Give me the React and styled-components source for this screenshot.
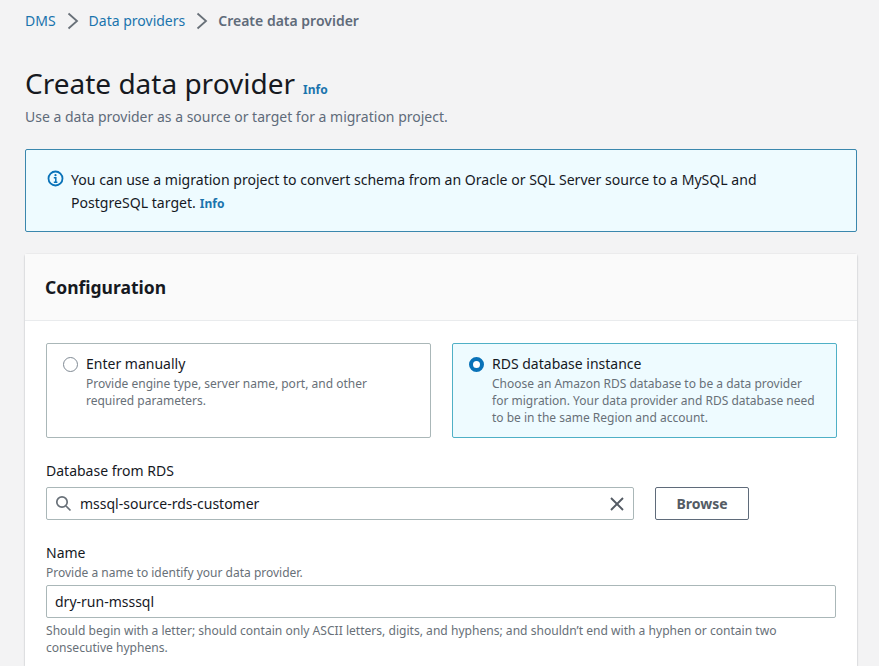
import React from "react";
import styled, { createGlobalStyle } from "styled-components";

const Global = createGlobalStyle`
  html, body { margin: 0; padding: 0; background: #f3f3f4; height: 666px; overflow: hidden; }
  body { font-family: "Noto Sans", "Open Sans", sans-serif; color: #16191f; }
  * { box-sizing: border-box; }
`;
const Page = styled.div`
  width: 879px; height: 666px; overflow: hidden; padding: 12px 22px 0 25px;
  display: flex; flex-direction: column;
`;
const Crumbs = styled.nav`
  display: flex; align-items: center; height: 18px; font-size: 14px; line-height: 18px;
`;
const CrumbLink = styled.span`color: #1a74ad;`;
const CrumbCurrent = styled.span`color: #5f6b7a; font-weight: 600;`;
const Chevron = styled.svg`width: 12px; height: 18px; margin: 0 10px 0 11px; flex: none;`;
const TitleRow = styled.div`
  display: flex; align-items: baseline; gap: 8px; margin-top: 32px; height: 42px;
`;
const Title = styled.h1`
  margin: 0; font-size: 28px; line-height: 42px; font-weight: 400; color: #16191f;
`;
const InfoLink = styled.span`
  color: #1a74ad; font-weight: 700; font-size: 12px;
`;
const Sub = styled.p`
  margin: 2px 0 0; font-size: 14px; line-height: 22px; color: #5f6b7a;
`;
const Alert = styled.div`
  margin-top: 21px; height: 83px; border: 1px solid #3a87ad; border-radius: 2px;
  background: #eefbff; padding: 18px 20px 0 21px; display: flex; gap: 7px;
`;
const AlertIcon = styled.svg`width: 17px; height: 17px; flex: none; margin-top: 2px;`;
const AlertText = styled.div`
  font-size: 14.08px; line-height: 23px; color: #16191f; width: 740px;
`;
const AlertLine = styled.div`
  display: flex; align-items: baseline; gap: 4px; white-space: nowrap;
`;
const Card = styled.section`
  margin-top: 22px; flex: 1; background: #fff; border-radius: 2px 2px 0 0;
  box-shadow: 0 1px 2px rgba(0,28,36,.25), 0 0 1px rgba(0,28,36,.2);
`;
const CardHeader = styled.header`
  height: 67px; background: #fafafa; border-bottom: 1px solid #e9ebed;
  padding: 20px 20px 0; font-size: 17.5px; line-height: 26px; font-weight: 700; color: #16191f;
`;
const CardBody = styled.div`padding: 22px 21px 0; display: flex; flex-direction: column;`;
const Tiles = styled.div`display: grid; grid-template-columns: 385px 385px; gap: 21px;`;
const Tile = styled.div`
  height: 95px; border: 1px solid ${p => p.$on ? "#4fb0c6" : "#aab7b8"}; border-radius: 2px;
  background: ${p => p.$on ? "#eefbff" : "#fff"}; padding: 10px 16px 0 16px; display: flex; gap: 8px;
`;
const Radio = styled.span`
  width: 15px; height: 15px; border-radius: 50%; flex: none; margin-top: 3px; background: #fff;
  border: ${p => p.$on ? "4.5px solid #0972b8" : "1px solid #808a94"};
`;
const TileText = styled.div`display: flex; flex-direction: column;`;
const TileTitle = styled.div`font-size: 14px; line-height: 20px; color: #16191f;`;
const TileDesc = styled.div`font-size: 12px; line-height: 17px; color: #687078; margin-top: 0.5px;`;
const FieldLabel = styled.div`
  font-size: 14px; line-height: 18px; color: #16191f; margin-top: ${p => p.$mt || 0}px;
`;
const FieldDesc = styled.div`font-size: 12px; line-height: 16px; color: #687078; margin-top: 3px;`;
const Row = styled.div`display: flex; gap: 21px; margin-top: 7px;`;
const InputBox = styled.div`
  height: 33px; width: ${p => p.$w}px; border: 1px solid #aab7b8; border-radius: 2px; background: #fff;
  display: flex; align-items: center; padding: 0 8px 0 8px; font-size: 14px; color: #16191f;
  margin-top: ${p => p.$mt || 0}px;
`;
const SearchIcon = styled.svg`width: 17px; height: 17px; flex: none; margin-right: 8px;`;
const ClearIcon = styled.svg`width: 16px; height: 16px; flex: none; margin-left: auto;`;
const Button = styled.div`
  width: 94px; height: 33px; border: 1px solid #5f6b7a; border-radius: 2px; background: #fff;
  display: flex; align-items: center; justify-content: center;
  font-size: 14px; font-weight: 700; color: #545b64;
`;
const Hint = styled.div`
  font-size: 12.08px; line-height: 17px; color: #687078; margin-top: 4px; width: 790px;
`;

export default function App() {
  const chev = (
    <Chevron viewBox="0 0 12 18" fill="none" stroke="#687078" strokeWidth="1.8">
      <path d="M1.5 1.5 L10 9 L1.5 16.5" />
    </Chevron>
  );
  return (
    <>
      <Global />
      <Page>
        <Crumbs>
          <CrumbLink>DMS</CrumbLink>{chev}
          <CrumbLink>Data providers</CrumbLink>{chev}
          <CrumbCurrent>Create data provider</CrumbCurrent>
        </Crumbs>
        <TitleRow>
          <Title>Create data provider</Title>
          <InfoLink>Info</InfoLink>
        </TitleRow>
        <Sub>Use a data provider as a source or target for a migration project.</Sub>
        <Alert>
          <AlertIcon viewBox="0 0 17 17" fill="none">
            <circle cx="8.5" cy="8.5" r="7" stroke="#0972b8" strokeWidth="1.8" />
            <circle cx="8.5" cy="5.2" r="1.1" fill="#0972b8" />
            <path d="M6.8 7.8H8.8V12M6.8 12.2H10.4" stroke="#0972b8" strokeWidth="1.5" />
          </AlertIcon>
          <AlertText>
            <AlertLine>You can use a migration project to convert schema from an Oracle or SQL Server source to a MySQL and</AlertLine>
            <AlertLine>PostgreSQL target. <InfoLink>Info</InfoLink></AlertLine>
          </AlertText>
        </Alert>
        <Card>
          <CardHeader>Configuration</CardHeader>
          <CardBody>
            <Tiles>
              <Tile>
                <Radio />
                <TileText>
                  <TileTitle>Enter manually</TileTitle>
                  <TileDesc>Provide engine type, server name, port, and other<br />required parameters.</TileDesc>
                </TileText>
              </Tile>
              <Tile $on>
                <Radio $on />
                <TileText>
                  <TileTitle>RDS database instance</TileTitle>
                  <TileDesc>Choose an Amazon RDS database to be a data provider<br />for migration. Your data provider and RDS database need<br />to be in the same Region and account.</TileDesc>
                </TileText>
              </Tile>
            </Tiles>
            <FieldLabel $mt={24}>Database from RDS</FieldLabel>
            <Row>
              <InputBox $w={588}>
                <SearchIcon viewBox="0 0 17 17" fill="none" stroke="#687078" strokeWidth="1.7">
                  <circle cx="7" cy="7" r="5.2" />
                  <path d="M11 11L15.5 15.5" />
                </SearchIcon>
                mssql-source-rds-customer
                <ClearIcon viewBox="0 0 16 16" fill="none" stroke="#545b64" strokeWidth="1.9">
                  <path d="M2 2L14 14M14 2L2 14" />
                </ClearIcon>
              </InputBox>
              <Button>Browse</Button>
            </Row>
            <FieldLabel $mt={24}>Name</FieldLabel>
            <FieldDesc>Provide a name to identify your data provider.</FieldDesc>
            <InputBox $w={790} $mt={4}>dry-run-msssql</InputBox>
            <Hint>Should begin with a letter; should contain only ASCII letters, digits, and hyphens; and shouldn’t end with a hyphen or contain two consecutive hyphens.</Hint>
          </CardBody>
        </Card>
      </Page>
    </>
  );
}
